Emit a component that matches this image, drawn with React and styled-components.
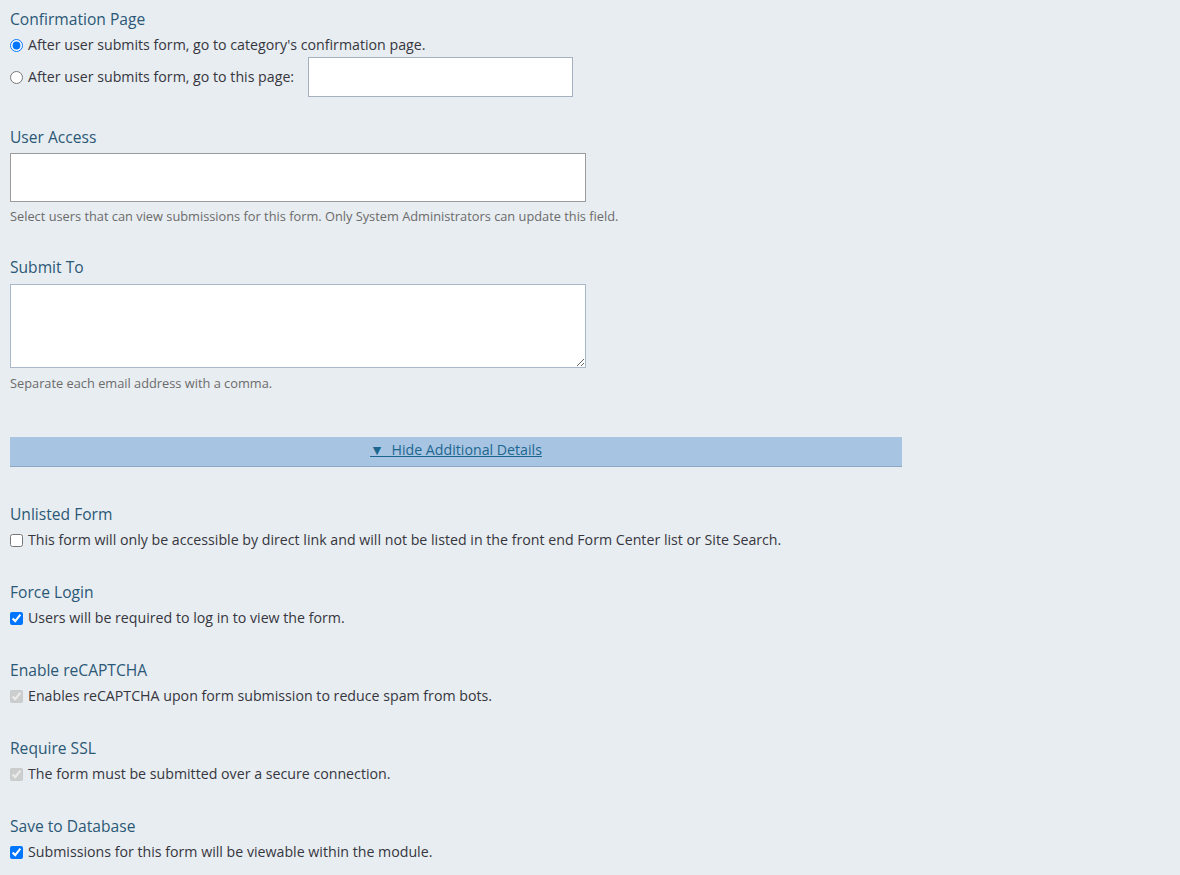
import React from "react";
import styled, { createGlobalStyle } from "styled-components";

const Global = createGlobalStyle`
  html, body { margin: 0; padding: 0; }
  body {
    background: #e8edf1;
    font-family: "Open Sans", "Lato", sans-serif;
    color: #333;
  }
`;

const Page = styled.div`
  padding: 9px 10px 20px 10px;
  display: flex;
  flex-direction: column;
`;

const Section = styled.section`
  display: flex;
  flex-direction: column;
  margin-top: ${(p) => p.$mt || 0}px;
`;

const Label = styled.div`
  font-size: 15.6px;
  line-height: 20px;
  color: #2b5876;
  margin-bottom: ${(p) => p.$mb || 6}px;
`;

const OptionRow = styled.label`
  display: flex;
  align-items: center;
  min-height: 20px;
  font-size: 14.2px;
  line-height: 20px;
  color: #363640;
  margin-top: ${(p) => p.$mt || 0}px;
`;

const Radio = styled.input.attrs({ type: "radio" })`
  width: 13px;
  height: 13px;
  margin: 0 5px 0 0;
  accent-color: #0075ff;
`;

const Check = styled.input.attrs({ type: "checkbox" })`
  width: 13px;
  height: 13px;
  margin: 0 5px 0 0;
  accent-color: #0075ff;
`;

const SmallInput = styled.input`
  box-sizing: border-box;
  width: 265px;
  height: 40px;
  margin-left: 14px;
  border: 1px solid #a6b1bf;
  background: #fff;
`;

const WideInput = styled.div`
  box-sizing: border-box;
  width: 576px;
  height: 49px;
  border: 1px solid #9b9b9b;
  background: #fff;
`;

const TextArea = styled.textarea`
  box-sizing: border-box;
  width: 576px;
  height: 84px;
  border: 1px solid #a9b8c9;
  background: #fff;
  margin: 0;
  display: block;
`;

const Help = styled.div`
  font-size: 12.8px;
  line-height: 16px;
  color: #6b6b6b;
  margin-top: ${(p) => p.$mt || 6}px;
`;

const DetailsBar = styled.div`
  box-sizing: border-box;
  width: 892px;
  height: 30px;
  margin-top: 46px;
  padding-bottom: 3px;
  background: #a7c5e2;
  border-bottom: 1px solid #8aa8c6;
  display: flex;
  align-items: center;
  justify-content: center;
`;

const DetailsLink = styled.a`
  font-size: 14.2px;
  line-height: 18px;
  color: #1d6690;
  text-decoration: underline;
  cursor: pointer;
  white-space: pre;
`;

const checks = [
  {
    title: "Unlisted Form",
    text: "This form will only be accessible by direct link and will not be listed in the front end Form Center list or Site Search.",
    checked: false,
    disabled: false,
  },
  {
    title: "Force Login",
    text: "Users will be required to log in to view the form.",
    checked: true,
    disabled: false,
  },
  {
    title: "Enable reCAPTCHA",
    text: "Enables reCAPTCHA upon form submission to reduce spam from bots.",
    checked: true,
    disabled: true,
  },
  {
    title: "Require SSL",
    text: "The form must be submitted over a secure connection.",
    checked: true,
    disabled: true,
  },
  {
    title: "Save to Database",
    text: "Submissions for this form will be viewable within the module.",
    checked: true,
    disabled: false,
  },
];

export default function App() {
  return (
    <>
      <Global />
      <Page>
        <Section>
          <Label>Confirmation Page</Label>
          <OptionRow>
            <Radio name="confirm" defaultChecked />
            After user submits form, go to category's confirmation page.
          </OptionRow>
          <OptionRow $mt={2}>
            <Radio name="confirm" />
            After user submits form, go to this page:
            <SmallInput type="text" />
          </OptionRow>
        </Section>

        <Section $mt={30}>
          <Label>User Access</Label>
          <WideInput />
          <Help>
            Select users that can view submissions for this form. Only System
            Administrators can update this field.
          </Help>
        </Section>

        <Section $mt={33}>
          <Label $mb={7}>Submit To</Label>
          <TextArea />
          <Help $mt={7}>Separate each email address with a comma.</Help>
        </Section>

        <DetailsBar>
          <DetailsLink>{"▼  Hide Additional Details"}</DetailsLink>
        </DetailsBar>

        {checks.map((c, i) => (
          <Section key={c.title} $mt={i === 0 ? 37 : 32}>
            <Label>{c.title}</Label>
            <OptionRow>
              <Check
                defaultChecked={c.checked}
                disabled={c.disabled}
              />
              {c.text}
            </OptionRow>
          </Section>
        ))}
      </Page>
    </>
  );
}
